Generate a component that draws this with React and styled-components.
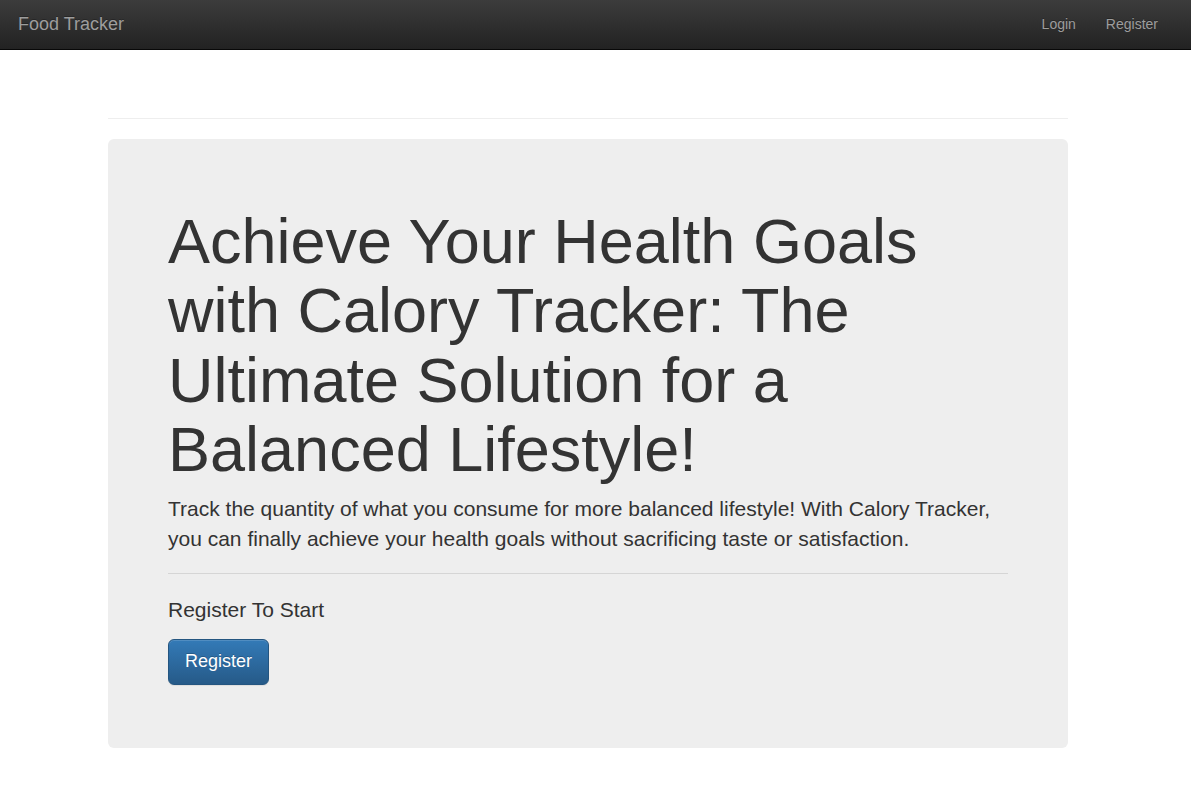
import React from 'react'
import styled, { createGlobalStyle } from 'styled-components'

const GlobalStyle = createGlobalStyle`
  html, body {
    margin: 0;
    padding: 0;
    background: #fff;
  }
  body {
    font-family: "Liberation Sans", Arial, Helvetica, sans-serif;
    font-size: 14px;
    line-height: 1.42857;
    color: #333;
  }
  * {
    box-sizing: border-box;
  }
`

const NavBar = styled.nav`
  height: 50px;
  display: flex;
  align-items: center;
  justify-content: space-between;
  padding: 0 18px 2px 18px;
  background-image: linear-gradient(to bottom, #3c3c3c 0, #222 100%);
  border-bottom: 1px solid #080808;
`

const Brand = styled.a`
  font-size: 18px;
  line-height: 20px;
  color: #9d9d9d;
  text-decoration: none;
  text-shadow: 0 -1px 0 rgba(0, 0, 0, 0.25);
  cursor: pointer;
`

const NavLinks = styled.ul`
  display: flex;
  list-style: none;
  margin: 0;
  padding: 0;
`

const NavLink = styled.a`
  display: block;
  padding: 15px;
  line-height: 20px;
  font-size: 14px;
  color: #9d9d9d;
  text-decoration: none;
  text-shadow: 0 -1px 0 rgba(0, 0, 0, 0.25);
  cursor: pointer;
`

const Main = styled.main`
  padding: 68px 15px 40px 0;
`

const Container = styled.div`
  width: 960px;
  margin: 0 auto;
`

const Rule = styled.hr`
  border: 0;
  border-top: 1px solid ${(p) => p.$color || '#eee'};
  margin: ${(p) => p.$margin || '0 0 20px'};
`

const Jumbotron = styled.section`
  background: #eee;
  border-radius: 6px;
  padding: 48px 60px 63px;
`

const Title = styled.h1`
  font-size: 63px;
  font-weight: 500;
  line-height: 1.1;
  margin: 20px 0 10px;
  color: #333;
`

const Lead = styled.p`
  font-size: 21px;
  line-height: 30px;
  font-weight: 200;
  margin: 0 0 15px;
  color: #333;
`

const SubHeading = styled.h4`
  font-size: 21px;
  font-weight: 500;
  line-height: 1.1;
  margin: 24px 0 18px;
  color: #333;
`

const Button = styled.button`
  display: inline-block;
  padding: 10px 16px;
  font-family: inherit;
  font-size: 18px;
  line-height: 1.3333;
  color: #fff;
  border: 1px solid #245580;
  border-radius: 6px;
  background-image: linear-gradient(to bottom, #337ab7 0, #265a88 100%);
  text-shadow: 0 -1px 0 rgba(0, 0, 0, 0.2);
  box-shadow: inset 0 1px 0 rgba(255, 255, 255, 0.15), 0 1px 1px rgba(0, 0, 0, 0.075);
  cursor: pointer;
`

function App() {
  return (
    <>
      <GlobalStyle />
      <NavBar>
        <Brand>Food Tracker</Brand>
        <NavLinks>
          <li><NavLink>Login</NavLink></li>
          <li><NavLink>Register</NavLink></li>
        </NavLinks>
      </NavBar>
      <Main>
        <Container>
          <Rule />
          <Jumbotron>
            <Title>
              Achieve Your Health Goals with Calory Tracker: The Ultimate Solution for a Balanced Lifestyle!
            </Title>
            <Lead>
              Track the quantity of what you consume for more balanced lifestyle! With Calory Tracker,
              you can finally achieve your health goals without sacrificing taste or satisfaction.
            </Lead>
            <Rule $color="#d5d5d5" $margin="19px 0 0" />
            <SubHeading>Register To Start</SubHeading>
            <Button>Register</Button>
          </Jumbotron>
        </Container>
      </Main>
    </>
  )
}

export default App
